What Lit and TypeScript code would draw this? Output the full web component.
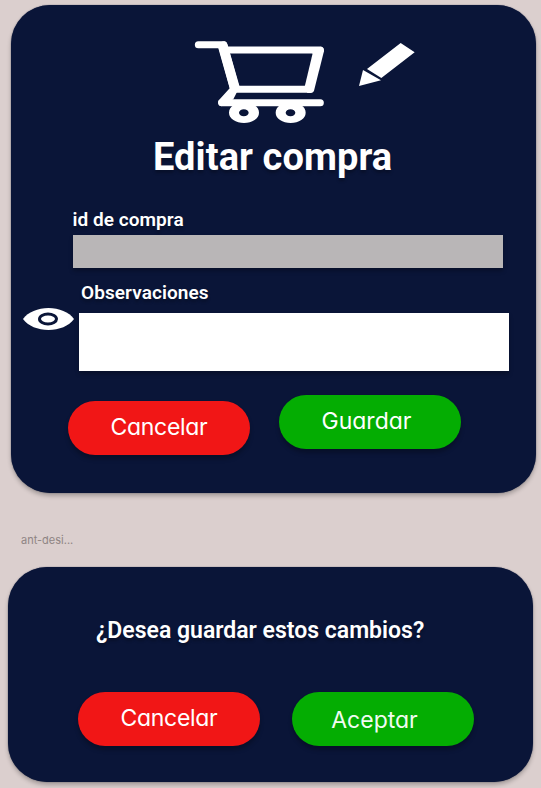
import { LitElement, html, css, svg } from "lit";
import { customElement, property } from "lit/decorators.js";

@customElement("pill-button")
class PillButton extends LitElement {
  @property({ reflect: true }) tone = "danger";
  static styles = css`
    :host { display: block; width: 182px; height: 54px; flex: none; }
    .pill {
      box-sizing: border-box; width: 100%; height: 100%; border: 0; border-radius: 27px;
      padding: 0 0 2px; display: flex; align-items: center; justify-content: center;
      background: #f11616; color: #fff;
      box-shadow: 0 4px 4px rgba(0, 0, 0, 0.25);
      font: 400 23px/30px Inter, "Liberation Sans", sans-serif;
      font-feature-settings: "cv11" 1;
      letter-spacing: -0.3px;
    }
    :host([tone="success"]) .pill { background: #04ad02; padding-right: 7px; letter-spacing: 0; }
    :host([tone="accept"]) .pill { background: #04ad02; padding: 2px 17px 0 0; color: #f1fbf1; letter-spacing: 0; }
  `;
  render() {
    return html`<button class="pill"><slot></slot></button>`;
  }
}

@customElement("app-root")
class AppRoot extends LitElement {
  static styles = css`
    :host {
      display: block; box-sizing: border-box; width: 541px; height: 788px; overflow: hidden;
      background: #dbcfce; padding: 4.5px 0 0 7.5px;
      font-family: Roboto, "Liberation Sans", sans-serif; color: #fff;
    }
    .card {
      box-sizing: border-box; width: 525.5px; border-radius: 39px; background: #0a1538;
      box-shadow: 0 3px 4px rgba(0, 0, 0, 0.25), 0 0 1px rgba(10, 21, 56, 0.8);
      display: flow-root;
    }
    .edit { height: 488.5px; margin-left: 3px; }
    .confirm { height: 214.5px; }
    .icons { display: block; width: 250px; height: 100px; margin: 25.5px 0 0 169.5px; fill: #fff; }
    h1, h2, label { display: block; margin: 0; white-space: nowrap; font-weight: 600; text-shadow: 0 3px 3px rgba(0, 0, 0, 0.25); }
    h1 { margin: 4px 0 0 142.5px; font-size: 38px; font-weight: 700; line-height: 46px; letter-spacing: 0.08px; }
    .id-label { margin: 28px 0 0 62px; font-size: 19px; line-height: 24px; letter-spacing: 0.05px; }
    .id-field { margin: 2.6px 0 0 62.7px; width: 430px; height: 33.4px; background: #b9b6b7; box-shadow: 0 3px 4px rgba(0, 0, 0, 0.25); }
    .notes { display: flex; margin: 13px 0 0 12.5px; }
    .eye { width: 51px; height: 22px; margin-top: 27px; flex: none; }
    .notes-body { margin-left: 4.5px; }
    .notes-label { margin-left: 2.5px; font-size: 19px; line-height: 24px; letter-spacing: 0.08px; }
    .notes-field { margin-top: 8px; width: 430px; height: 58px; background: #fff; box-shadow: 0 3px 4px rgba(0, 0, 0, 0.25); }
    .actions { display: flex; }
    .edit .actions { margin: 24.5px 0 0 57.5px; gap: 29px; }
    .edit .actions pill-button:first-child { margin-top: 5.5px; }
    .confirm .actions { margin: 47px 0 0 70.5px; gap: 32px; }
    .caption { height: 74px; box-sizing: border-box; padding: 40px 0 0 13.5px; font: 11px/14px Inter, sans-serif; color: #8f8584; }
    h2 { margin: 50px 0 0 88.5px; font-size: 23px; line-height: 28px; }
  `;

  private icons() {
    return svg`
      <g fill="none" stroke="#fff" stroke-linejoin="round" stroke-linecap="round">
        <path stroke-width="21" d="M55 44H131"/>
        <path stroke-width="28" d="M129 48L165 178" stroke-linecap="butt"/>
        <path stroke-width="21" d="M140 60H421M165 178H391M125 218H421"/>
      </g>
      <path d="M120 44Q121 34 133 34Q142 36 144 49L179 170L160 208L124 229Q111 223 115 212L149 175L115 55Z"/>
      <path d="M398 70L374 170L382 189H392Q400 188 402 182L432 63Q432 51 421 50Z"/>
      <path fill-rule="evenodd" d="M147 248a45 31 0 1 0 90 0a45 31 0 1 0-90 0M177 248a14.500 10.500 0 1 1 29 0a14.500 10.500 0 1 1-29 0M287 248a45 31 0 1 0 90 0a45 31 0 1 0-90 0M317 248a14.500 10.500 0 1 1 29 0a14.500 10.500 0 1 1-29 0"/>
      <path d="M662 39L704 67L604 144L561 117ZM549 120L603 151L537 168Z"/>`;
  }

  render() {
    return html`
      <section class="card edit">
        <svg class="icons" viewBox="0 0 750 300">${this.icons()}</svg>
        <h1>Editar compra</h1>
        <label class="id-label">id de compra</label>
        <div class="id-field"></div>
        <div class="notes">
          <svg class="eye" viewBox="0 0 51 22">
            <path fill="#fff" d="M0 11C5 4 15 0 25.500 0S46 4 51 11C46 18 36 22 25.500 22S5 18 0 11Z"/>
            <ellipse cx="25" cy="11" rx="8.500" ry="4.900" fill="#fff" stroke="#0a1538" stroke-width="3"/>
          </svg>
          <div class="notes-body">
            <label class="notes-label">Observaciones</label>
            <div class="notes-field"></div>
          </div>
        </div>
        <div class="actions">
          <pill-button>Cancelar</pill-button>
          <pill-button tone="success">Guardar</pill-button>
        </div>
      </section>
      <div class="caption">ant-desi...</div>
      <section class="card confirm">
        <h2>¿Desea guardar estos cambios?</h2>
        <div class="actions">
          <pill-button>Cancelar</pill-button>
          <pill-button tone="accept">Aceptar</pill-button>
        </div>
      </section>`;
  }
}
